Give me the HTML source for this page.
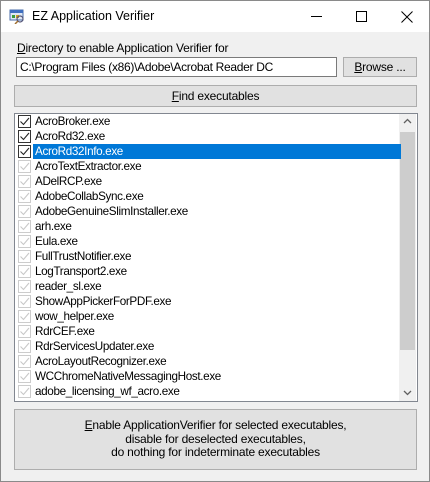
<!DOCTYPE html>
<html><head><style>
*{margin:0;padding:0;box-sizing:border-box}
body{width:430px;height:482px;overflow:hidden;background:#fff;font-family:"Liberation Sans",sans-serif;font-size:12px;color:#000}
.a{position:absolute}
#win{left:0;top:0;width:430px;height:482px;border:1px solid #8a8a8a;background:#f0f0f0}
#title{left:0;top:0;width:428px;height:31px;background:#fff}
.btn{background:#e1e1e1;border:1px solid #adadad;text-align:center;letter-spacing:-0.2px}
.row{position:absolute;left:2px;height:15px;width:382px;line-height:15px;letter-spacing:-0.35px;font-size:11.7px}
.cb{position:absolute;left:1px;top:1px;width:13px;height:13px;border:1px solid #333;background:#fff}
.cb.g{border-color:#ccc}
.cb svg{position:absolute;left:0;top:0}
.row span{position:absolute;left:16px;padding:0 2px}
.sel span{background:#0078d7;color:#fff;width:368px}
</style></head><body>
<div id="win" class="a">
<div id="title" class="a">
 <svg class="a" style="left:8px;top:7px" width="16" height="16"><rect x="1" y="2" width="13" height="10" fill="#dfe8f5" stroke="#4a6ea9"/><rect x="1" y="2" width="13" height="3" fill="#3f6fc0"/><rect x="3" y="7" width="3" height="3" fill="#3a9a3a"/><rect x="7" y="7" width="3" height="3" fill="#d0a020"/><circle cx="11" cy="11" r="3" fill="none" stroke="#557" stroke-width="1.2"/><line x1="9" y1="13" x2="6" y2="16" stroke="#a07030" stroke-width="1.5"/></svg>
 <div class="a" style="left:31px;top:8px;font-size:12.5px">EZ Application Verifier</div>
 <div class="a" style="left:310px;top:15px;width:11px;height:1px;background:#000"></div>
 <div class="a" style="left:355px;top:10px;width:11px;height:11px;border:1px solid #000"></div>
 <svg class="a" style="left:400px;top:10px" width="12" height="12"><path d="M0.5 0.5L11.5 11.5M11.5 0.5L0.5 11.5" stroke="#000" stroke-width="1"/></svg>
</div>
<div class="a" style="left:16px;top:40px;letter-spacing:-0.2px"><u>D</u>irectory to enable Application Verifier for</div>
<div class="a" style="left:15px;top:56px;width:321px;height:20px;background:#fff;border:1px solid #7a7a7a;padding:2px 3px;line-height:14px;letter-spacing:-0.3px">C:\Program Files (x86)\Adobe\Acrobat Reader DC</div>
<div class="a btn" style="left:342px;top:56px;width:74px;height:20px;line-height:18px"><u>B</u>rowse ...</div>
<div class="a btn" style="left:13px;top:84px;width:403px;height:22px;line-height:20px"><u>F</u>ind executables</div>
<div class="a" style="left:13px;top:112px;width:404px;height:289px;background:#fff;border:1px solid #828790;overflow:hidden">
 <div class="a" style="left:384px;top:0;width:17px;height:287px;background:#f0f0f0">
  <svg class="a" style="left:4px;top:4px" width="9" height="6"><path d="M1 5L4.5 1.5L8 5" fill="none" stroke="#606060" stroke-width="1.3"/></svg>
  <div class="a" style="left:1px;top:18px;width:15px;height:218px;background:#cdcdcd"></div>
  <svg class="a" style="left:4px;top:276px" width="9" height="6"><path d="M1 1L4.5 4.5L8 1" fill="none" stroke="#606060" stroke-width="1.3"/></svg>
 </div>
 <div id="list"></div>
</div>
<div class="a btn" style="left:13px;top:408px;width:403px;height:61px;line-height:13.5px;padding-top:9px"><u>E</u>nable ApplicationVerifier for selected executables,<br>disable for deselected executables,<br>do nothing for indeterminate executables</div>
</div>
<script>
var n=["AcroBroker.exe","AcroRd32.exe","AcroRd32Info.exe","AcroTextExtractor.exe","ADelRCP.exe","AdobeCollabSync.exe","AdobeGenuineSlimInstaller.exe","arh.exe","Eula.exe","FullTrustNotifier.exe","LogTransport2.exe","reader_sl.exe","ShowAppPickerForPDF.exe","wow_helper.exe","RdrCEF.exe","RdrServicesUpdater.exe","AcroLayoutRecognizer.exe","WCChromeNativeMessagingHost.exe","adobe_licensing_wf_acro.exe"];
var h="";
n.forEach(function(t,i){var g=i>2;var c=g?"#c8c8c8":"#222";
h+='<div class="row'+(i==2?' sel':'')+'" style="top:'+(i*15)+'px"><div class="cb'+(g?' g':'')+'"><svg width="11" height="11"><path d="M1.5 5.5L4.5 8.5L10 2" fill="none" stroke="'+c+'" stroke-width="1.1"/></svg></div><span>'+t+'</span></div>';});
document.getElementById("list").innerHTML=h;
</script>
</body></html>
